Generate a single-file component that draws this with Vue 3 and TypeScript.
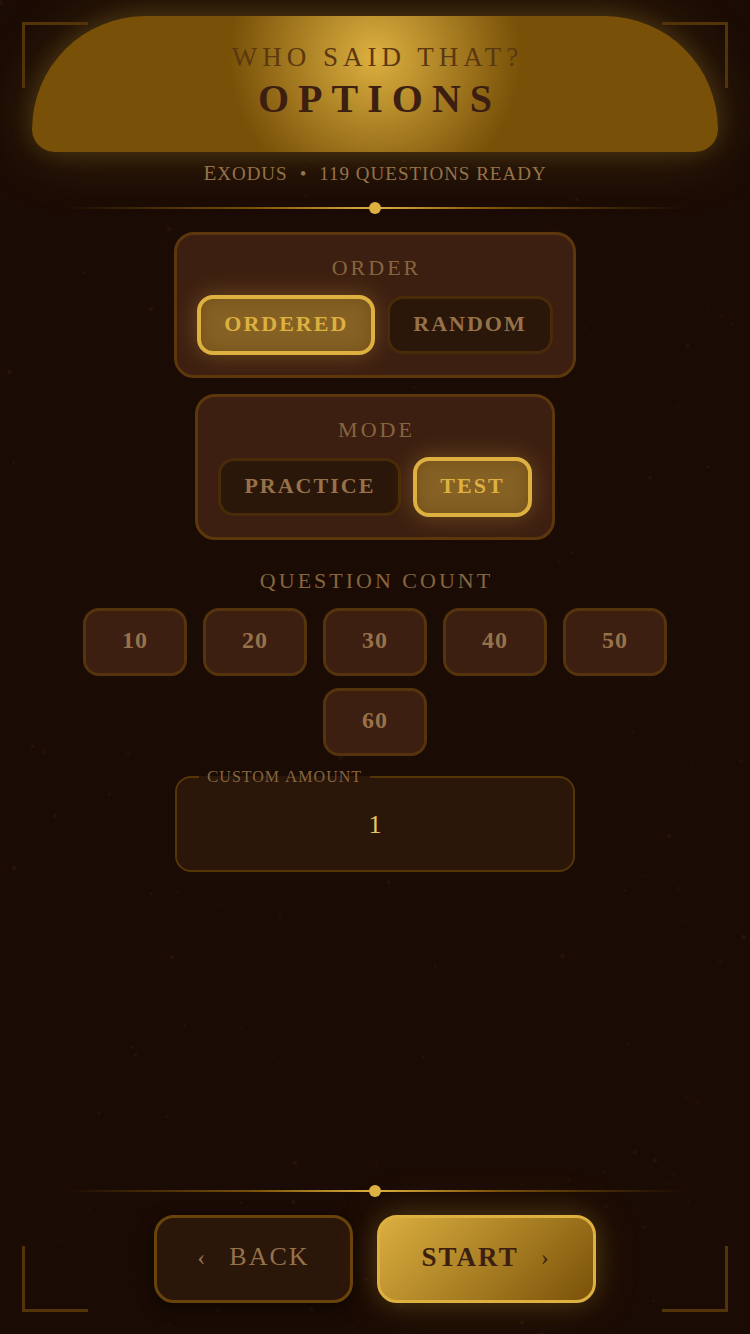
<script setup lang="ts">
import { ref } from 'vue'

interface Speck {
  x: string
  y: string
  r: number
  o: number
}

const orders = ['ORDERED', 'RANDOM']
const modes = ['PRACTICE', 'TEST']
const counts = [10, 20, 30, 40, 50, 60]

const order = ref('ORDERED')
const mode = ref('TEST')
const amount = ref(1)

// Deterministic dust, so the backdrop is the same on every load
function makeDust(total: number): Speck[] {
  let seed = 4217
  const next = (): number => {
    seed = (seed * 16807) % 2147483647
    return seed / 2147483647
  }
  return Array.from({ length: total }, () => ({
    x: `${(next() * 100).toFixed(2)}%`,
    y: `${(next() * 100).toFixed(2)}%`,
    r: 1 + Math.round(next() * 15) / 10,
    o: 0.03 + next() * 0.05,
  }))
}

const dust = makeDust(170)
</script>

<template>
  <div class="page">
    <svg class="dust" aria-hidden="true">
      <circle v-for="(s, i) in dust" :key="i" :cx="s.x" :cy="s.y" :r="s.r" :opacity="s.o" fill="#b08a60" />
    </svg>
    <i class="corner top left"></i>
    <i class="corner top right"></i>
    <i class="corner bottom left"></i>
    <i class="corner bottom right"></i>

    <header class="banner">
      <p class="game">WHO SAID THAT?</p>
      <h1 class="title">OPTIONS</h1>
    </header>

    <p class="summary">
      <span class="word">Exodus</span>
      <span>•</span>
      <span>119 questions ready</span>
    </p>

    <div class="divider"><span class="dot"></span></div>

    <main class="content">
      <section class="panel" aria-labelledby="order-label">
        <h2 id="order-label" class="label">ORDER</h2>
        <div class="options">
          <button
            v-for="o in orders"
            :key="o"
            type="button"
            class="option"
            :class="{ active: o === order }"
            :aria-pressed="o === order"
            @click="order = o"
          >{{ o }}</button>
        </div>
      </section>

      <section class="panel" aria-labelledby="mode-label">
        <h2 id="mode-label" class="label">MODE</h2>
        <div class="options">
          <button
            v-for="m in modes"
            :key="m"
            type="button"
            class="option"
            :class="{ active: m === mode }"
            :aria-pressed="m === mode"
            @click="mode = m"
          >{{ m }}</button>
        </div>
      </section>

      <section class="count" aria-labelledby="count-label">
        <h2 id="count-label" class="label">QUESTION COUNT</h2>
        <div class="chips">
          <button v-for="c in counts" :key="c" type="button" class="chip" @click="amount = c">{{ c }}</button>
        </div>
      </section>

      <fieldset class="custom">
        <legend><label for="amount"><span class="word">Custom</span> <span class="word">Amount</span></label></legend>
        <input id="amount" v-model="amount" type="text" inputmode="numeric" />
      </fieldset>
    </main>

    <footer class="footer">
      <div class="divider"><span class="dot"></span></div>
      <nav class="actions">
        <button type="button" class="action back"><span class="arrow">‹</span><span>BACK</span></button>
        <button type="button" class="action start"><span>START</span><span class="arrow">›</span></button>
      </nav>
    </footer>
  </div>
</template>

<style>
body {
  background: #1a0b04;
}
</style>

<style scoped>
.page {
  --gold: #ddb040;
  --bronze: #785008;
  --tan: #96724a;
  --umber: #3d1f11;
  --dark: #2b160a;
  position: relative;
  box-sizing: border-box;
  min-height: 100vh;
  padding: 16px 32px 31px;
  display: flex;
  flex-direction: column;
  background: #1a0b04;
  color: var(--tan);
  font-family: "Liberation Serif", "Times New Roman", serif;
  overflow: hidden;
}

.page > * {
  flex-shrink: 0;
}

p,
h1,
h2 {
  margin: 0;
}

button {
  box-sizing: border-box;
  font-family: inherit;
  cursor: pointer;
}

.dust {
  position: absolute;
  inset: 0;
  width: 100%;
  height: 100%;
  pointer-events: none;
}

.corner {
  position: absolute;
  z-index: 2;
  box-sizing: border-box;
  width: 66px;
  height: 66px;
  border: 0 solid #533408;
  pointer-events: none;
}

.corner.top {
  top: 22px;
  border-top-width: 3px;
}

.corner.bottom {
  bottom: 22px;
  border-bottom-width: 3px;
}

.corner.left {
  left: 22px;
  border-left-width: 3px;
}

.corner.right {
  right: 22px;
  border-right-width: 3px;
}

.banner {
  position: relative;
  box-sizing: border-box;
  min-height: 136px;
  padding: 24px 16px;
  border-radius: 120px 120px 24px 24px;
  background: radial-gradient(circle at 50% 30%, var(--gold), var(--bronze) 41%);
  box-shadow: 0 0 24px rgba(221, 176, 64, 0.2), 0 0 64px rgba(221, 176, 64, 0.2);
  color: #3d1f11;
  text-align: center;
}

.game {
  font-size: 27px;
  line-height: 34px;
  letter-spacing: 5px;
  text-indent: 5px;
  color: #5a3810;
}

.title {
  font-size: 40px;
  line-height: 50px;
  letter-spacing: 9px;
  text-indent: 9px;
  font-weight: 700;
}

.summary {
  position: relative;
  padding-top: 10px;
  display: flex;
  justify-content: center;
  gap: 12px;
  height: 24px;
  font-size: 19px;
  line-height: 24px;
  letter-spacing: 1px;
  text-transform: uppercase;
}

.word {
  display: inline-block;
}

.word::first-letter {
  font-size: 21px;
  line-height: 16px;
}

.divider {
  position: relative;
  display: flex;
  align-items: center;
  justify-content: center;
  height: 12px;
  margin: 16px 34px 18px;
  background: linear-gradient(90deg, transparent, var(--bronze) 30%, var(--gold) 50%, var(--bronze) 70%, transparent) center / 100% 2px no-repeat;
}

.dot {
  width: 12px;
  height: 12px;
  border-radius: 50%;
  background: var(--gold);
}

.content {
  position: relative;
  display: flex;
  flex-direction: column;
  align-items: center;
}

.panel {
  padding: 19px 20px 20px;
  margin-bottom: 16px;
  border: 3px solid #5c370c;
  border-radius: 20px;
  background: var(--umber);
}

.label {
  font-size: 22px;
  line-height: 28px;
  font-weight: 400;
  letter-spacing: 3px;
  text-indent: 3px;
  text-align: center;
  color: #86653f;
}

.options {
  display: flex;
  align-items: center;
  gap: 12px;
  min-height: 60px;
  margin-top: 13px;
}

.option {
  height: 58px;
  padding: 0 23px 3px;
  border: 3px solid #482b08;
  border-radius: 16px;
  background: var(--dark);
  color: var(--tan);
  font-size: 22px;
  font-weight: 700;
  letter-spacing: 2px;
}

.option.active {
  height: 60px;
  border: 4px solid var(--gold);
  background: #856124;
  color: var(--gold);
  box-shadow: 0 0 24px rgba(221, 176, 64, 0.3), inset 0 0 16px rgba(90, 55, 10, 0.4);
}

.count {
  align-self: stretch;
  margin-top: 11px;
}

.chips {
  display: flex;
  flex-wrap: wrap;
  justify-content: center;
  gap: 12px 16px;
  margin-top: 13px;
}

.chip {
  width: 104px;
  height: 68px;
  padding: 0 0 3px;
  border: 3px solid #55330c;
  border-radius: 16px;
  background: var(--umber);
  color: var(--tan);
  font-size: 24px;
  font-weight: 700;
  letter-spacing: 1px;
}

.custom {
  box-sizing: border-box;
  width: 100%;
  max-width: 400px;
  margin: 11px 0 0;
  padding: 0 22px;
  border: 2px solid #553408;
  border-radius: 16px;
  background: var(--dark);
}

.custom legend {
  padding: 0 8px;
  font-size: 16px;
  line-height: 20px;
  letter-spacing: 1px;
  text-transform: uppercase;
  color: #86653f;
}

.custom .word::first-letter {
  font-size: 17px;
}

.custom input {
  display: block;
  box-sizing: border-box;
  width: 100%;
  height: 83px;
  padding: 0 0 8px;
  border: 0;
  outline: 0;
  background: transparent;
  color: #e6c860;
  font-family: inherit;
  font-size: 26px;
  text-align: center;
}

.footer {
  position: relative;
  margin-top: auto;
}

.actions {
  display: flex;
  justify-content: center;
  gap: 24px;
}

.action {
  display: flex;
  align-items: center;
  justify-content: center;
  gap: 22px;
  height: 88px;
  padding: 0 40px 4px;
  border: 3px solid #68430a;
  border-radius: 20px;
  font-size: 26px;
  letter-spacing: 2px;
}

.back {
  background: var(--dark);
  color: var(--tan);
  box-shadow: 0 4px 16px rgba(0, 0, 0, 0.5);
}

.start {
  padding: 0 42px 4px;
  border-color: var(--gold);
  background: linear-gradient(135deg, var(--gold), var(--bronze)) border-box;
  color: #3d1f11;
  font-size: 27px;
  font-weight: 700;
  box-shadow: 0 0 24px rgba(221, 176, 64, 0.2), 0 0 48px rgba(221, 176, 64, 0.15);
}

.arrow {
  font-size: 24px;
  font-weight: 400;
}
</style>
